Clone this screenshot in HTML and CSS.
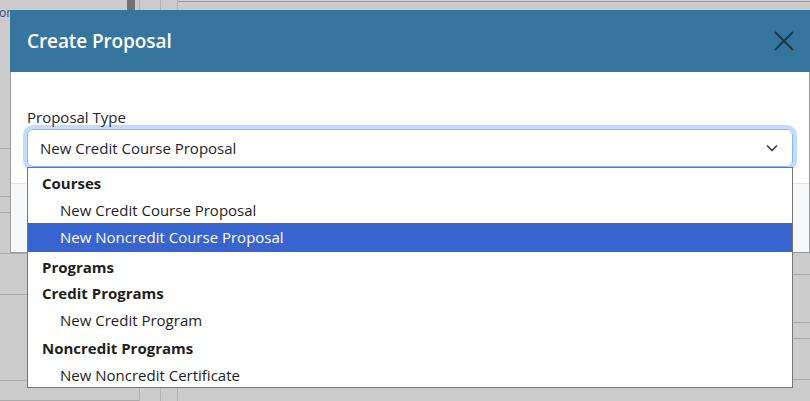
FILE: index.html
```html
<!DOCTYPE html>
<html lang="en">
<head>
<meta charset="utf-8">
<title>Create Proposal</title>
<link rel="stylesheet" href="styles.css">
</head>
<body>
<div class="page">
  <div class="col col-left">
    <div class="lrow lrow-top"><span class="link">or</span><span class="bar"></span></div>
    <div class="lrow h48"></div>
    <div class="lrow h16"></div>
    <div class="lrow h41"></div>
    <div class="lrow h41"></div>
    <div class="lrow h86"></div>
    <div class="lrow h20"></div>
  </div>
  <div class="col col-mid"></div>
  <div class="col col-mid2"></div>
  <div class="col col-main">
    <div class="mrow mrow-top"></div>
    <div class="mrow mrow-big"></div>
    <div class="mrow h48"></div>
    <div class="mrow h16"></div>
    <div class="mrow h41"></div>
  </div>
</div>

<div class="modal" role="dialog" aria-labelledby="modal-title">
  <div class="modal-header">
    <h5 class="modal-title" id="modal-title">Create Proposal</h5>
    <button class="btn-close" type="button" aria-label="Close">
      <svg viewBox="0 0 20 20" width="20" height="20" aria-hidden="true"><path d="M1 1 19 19M19 1 1 19" fill="none" stroke="currentColor" stroke-width="2.2"/></svg>
    </button>
  </div>
  <div class="modal-body">
    <label class="form-label">Proposal Type</label>
    <div class="select-wrap">
      <div class="form-select">
        <span>New Credit Course Proposal</span>
        <svg class="chev" viewBox="0 0 16 16" width="16" height="16" aria-hidden="true"><path d="m3.5 6 4.5 4.5 4.5-4.5" fill="none" stroke="#343a40" stroke-width="1.6" stroke-linecap="round" stroke-linejoin="round"/></svg>
      </div>
      <div class="listbox" role="listbox">
        <div class="grp">Courses</div>
        <div class="opt">New Credit Course Proposal</div>
        <div class="opt sel">New Noncredit Course Proposal</div>
        <div class="grp section">Programs</div>
        <div class="grp">Credit Programs</div>
        <div class="opt">New Credit Program</div>
        <div class="grp late">Noncredit Programs</div>
        <div class="opt">New Noncredit Certificate</div>
      </div>
    </div>
  </div>
  <div class="modal-footer"></div>
</div>
</body>
</html>
```

FILE: styles.css
```css
* { box-sizing: border-box; }
html, body { margin: 0; padding: 0; }
body {
  width: 810px;
  height: 401px;
  overflow: hidden;
  position: relative;
  background: #cccccc;
  font-family: "Open Sans", "Noto Sans", sans-serif;
  color: #212529;
}

/* background page (behind the backdrop) */
.page {
  display: grid;
  grid-template-columns: 140px 21px 17px 1fr;
  height: 401px;
}
.col { display: flex; flex-direction: column; }
.col-left { border-right: 1px solid #b3b3b3; }
.col-mid { border-right: 1px solid #b3b3b3; }
.col-mid2 { border-right: 1px solid #b3b3b3; }
.lrow { border-bottom: 1px solid #aaaaaa; flex: none; }
.lrow-top {
  height: 149px;
  display: flex;
  justify-content: space-between;
  align-items: flex-start;
  padding-right: 4px;
}
.link {
  font-size: 12px;
  line-height: 14px;
  margin-top: 6px;
  margin-left: -1px;
  color: #1d4a78;
}
.bar { width: 8px; height: 10px; background: #727272; }
.h48 { height: 48px; }
.h16 { height: 16px; }
.h41 { height: 41px; }
.h86 { height: 86px; }
.h20 { height: 20px; }
.mrow { border-bottom: 1px solid #aaaaaa; flex: none; }
.mrow-top { height: 2px; border-bottom-color: #9c9c9c; }
.mrow-big { height: 273px; }

/* modal */
.modal {
  position: absolute;
  top: 10px;
  left: 10px;
  width: 800px;
  background: #fff;
  border: 1px solid #9a9a9a;
  border-top: 0;
}
.modal-header {
  height: 62px;
  margin: 0 -1px;
  background: #36769e;
  display: flex;
  align-items: center;
  justify-content: space-between;
  padding: 0 16px 0 17px;
}
.modal-title {
  margin: 0;
  font-size: 19px;
  font-weight: 600;
  color: #fff;
  letter-spacing: -0.1px;
}
.btn-close {
  border: 0;
  background: none;
  padding: 0;
  width: 20px;
  height: 20px;
  color: #1b3b50;
  display: flex;
}
.modal-body {
  padding: 33px 16px 16px;
}
.form-label {
  display: block;
  font-size: 15px;
  line-height: 24px;
  color: #212529;
}
.select-wrap {
  position: relative;
}
.form-select {
  height: 38px;
  border: 1px solid #86b7fe;
  border-radius: 6px;
  box-shadow: 0 0 0 4px rgba(13, 110, 253, 0.25);
  display: flex;
  align-items: center;
  justify-content: space-between;
  padding: 0 12px;
  font-size: 15px;
}
.chev { flex: none; }
.listbox {
  position: absolute;
  left: 0;
  right: 0;
  top: 38px;
  height: 221px;
  overflow: hidden;
  background: #fff;
  border: 1px solid #767676;
  padding-top: 2px;
  font-size: 15px;
  color: #1e1e1e;
}
.grp {
  height: 26px;
  line-height: 26px;
  font-weight: 700;
  padding-left: 14px;
}
.grp.section { margin-top: 2px; }
.grp.late { margin-top: 1px; }
.opt {
  height: 28px;
  line-height: 28px;
  padding-left: 32px;
}
.opt.sel {
  position: relative;
  margin-top: -1px;
  height: 29px;
  line-height: 29px;
  background: #3764cf;
  color: #fff;
}
.modal-footer {
  height: 69px;
  border-top: 1px solid #dee2e6;
  background: #f7f8fa;
}
```
